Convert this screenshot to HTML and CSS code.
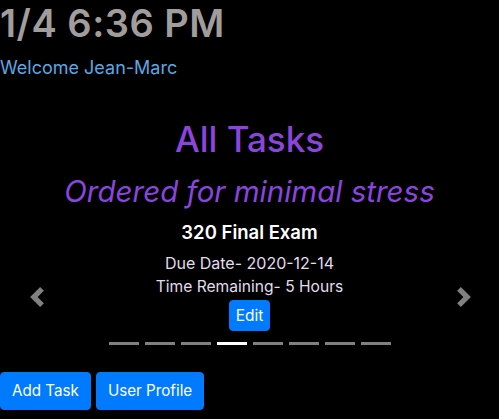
FILE: index.html
```html
<!DOCTYPE html>
<html>
<head>
<meta charset="utf-8">
<link rel="stylesheet" href="styles.css">
</head>
<body>
  <h1 class="clock">1/4 6:36 PM</h1>
  <div class="welcome">Welcome Jean-Marc</div>

  <h1 class="title">All Tasks</h1>
  <h2 class="subtitle">Ordered for minimal stress</h2>

  <div class="carousel">
    <div class="slide">
      <h5 class="task-name">320 Final Exam</h5>
      <div class="task-line">Due Date- 2020-12-14</div>
      <div class="task-line">Time Remaining- 5 Hours</div>
      <button class="btn btn-edit">Edit</button>
    </div>
    <ol class="indicators">
      <li></li><li></li><li></li><li class="active"></li><li></li><li></li><li></li><li></li>
    </ol>
    <a class="control control-prev" href="#">
      <svg width="20" height="20" viewBox="0 0 8 8"><path fill="#fff" d="M5.25 0l-4 4 4 4 1.5-1.5L4.25 4l2.5-2.5L5.25 0z"/></svg>
    </a>
    <a class="control control-next" href="#">
      <svg width="20" height="20" viewBox="0 0 8 8"><path fill="#fff" d="M2.75 0l-1.5 1.5L3.75 4l-2.5 2.5L2.75 8l4-4-4-4z"/></svg>
    </a>
  </div>

  <div class="actions">
    <button class="btn btn-action">Add Task</button>
    <button class="btn btn-action">User Profile</button>
  </div>
</body>
</html>
```

FILE: styles.css
```css
html, body {
  margin: 0;
  padding: 0;
  background: #000;
}
body {
  font-family: Inter, "Noto Sans", sans-serif;
  font-size: 16px;
  line-height: 24px;
  color: #fff;
}
.clock {
  margin: 0 0 10px;
  font-size: 38px;
  line-height: 46px;
  font-weight: 600;
  letter-spacing: 0.5px;
  color: #a19d9d;
}
.welcome {
  font-size: 18px;
  line-height: 24px;
  color: #5ca8e4;
}
.title {
  margin: 38px 0 13px;
  text-align: center;
  font-size: 35px;
  line-height: 42px;
  font-weight: 500;
  color: #8b45de;
}
.subtitle {
  margin: 0 0 11px;
  text-align: center;
  font-size: 29.5px;
  line-height: 36px;
  font-weight: 400;
  font-style: italic;
  color: #8b45de;
}
.carousel {
  position: relative;
}
.slide {
  text-align: center;
}
.task-name {
  margin: 0 0 7px;
  font-size: 18.5px;
  line-height: 24px;
  font-weight: 600;
  color: #fff;
}
.task-line {
  color: #e2dcef;
  font-size: 16px;
  line-height: 24px;
}
.task-line + .task-line {
  font-size: 15.6px;
}
.btn {
  font-family: inherit;
  font-size: 16px;
  line-height: 24px;
  color: #fff;
  background: #007bff;
  border: 1px solid #007bff;
  border-radius: 4px;
  padding: 6px 12px;
  cursor: pointer;
}
.btn-edit {
  margin-top: 1px;
  padding: 2px 6px;
  height: 31px;
  line-height: 25px;
  font-size: 15.5px;
}
.btn-action {
  font-size: 15.2px;
  padding: 6px 11px;
  height: 38px;
}
.indicators {
  display: flex;
  justify-content: center;
  gap: 6px;
  list-style: none;
  margin: 11px 0 0;
  padding: 0;
}
.indicators li {
  width: 30px;
  height: 3px;
  background: #808080;
}
.indicators li.active {
  background: #fff;
}
.control {
  position: absolute;
  top: -2px;
  height: 158px;
  display: flex;
  align-items: center;
  justify-content: center;
  opacity: 0.5;
}
.control-prev {
  left: 0;
  width: 73px;
}
.control-next {
  right: 0;
  width: 70px;
}
.actions {
  display: flex;
  gap: 5px;
  margin-top: 27px;
}
```
